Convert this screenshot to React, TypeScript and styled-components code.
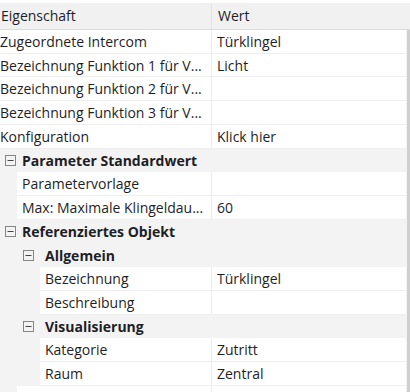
import React from "react";
import styled, { createGlobalStyle } from "styled-components";

const Global = createGlobalStyle`
  html, body { margin: 0; padding: 0; background: #ffffff; }
  body { font-family: "Open Sans", "Noto Sans", sans-serif; font-size: 14px; color: #1e1e26; }
`;

const NAME_W = 212;
const ROW_H = 23.73;

const Grid = styled.div`
  width: 410px;
  padding-top: 3px;
  overflow: hidden;
  height: 392px;
  box-sizing: border-box;
`;

const Header = styled.div`
  display: grid;
  grid-template-columns: ${NAME_W}px 1fr;
  height: 27px;
  background: #f1f1f1;
  border-bottom: 1px solid #dcdcdc;
  box-sizing: border-box;
`;

const HeaderCell = styled.div<{ $first?: boolean }>`
  display: flex;
  align-items: center;
  padding-left: ${(p) => (p.$first ? 1 : 6)}px;
  border-right: ${(p) => (p.$first ? "1px solid #e4e4e4" : "none")};
  line-height: 1;
`;

const Body = styled.div`
  border-right: 3px solid #cfcfcf;
  background: #f3f3f3;
`;

const RowBox = styled.div`
  display: flex;
  height: ${ROW_H}px;
  box-sizing: border-box;
  background: #f3f3f3;
`;

const Gutter = styled.div<{ $w: number }>`
  width: ${(p) => p.$w}px;
  flex: none;
  display: flex;
  align-items: center;
`;

const Spacer = styled.span<{ $w: number }>`
  width: ${(p) => p.$w}px;
  flex: none;
`;

const NameCell = styled.div<{ $pad: number; $w: number }>`
  width: ${(p) => p.$w}px;
  flex: none;
  box-sizing: border-box;
  background: #ffffff;
  border-right: 1px solid #ececec;
  border-bottom: 1px solid #efefef;
  padding-left: ${(p) => p.$pad}px;
  display: flex;
  align-items: center;
  white-space: nowrap;
  overflow: hidden;
`;

const ValueCell = styled.div`
  flex: 1;
  box-sizing: border-box;
  background: #ffffff;
  border-bottom: 1px solid #efefef;
  padding-left: 5px;
  display: flex;
  align-items: center;
  white-space: nowrap;
  overflow: hidden;
  margin-right: 1px;
`;

const CatLabel = styled.div`
  display: flex;
  align-items: center;
  font-weight: 700;
  white-space: nowrap;
`;

const ToggleBox = styled.svg`
  flex: none;
  display: block;
`;

const Toggle = () => (
  <ToggleBox width="11" height="11" viewBox="0 0 11 11">
    <rect x="0.5" y="0.5" width="10" height="10" fill="none" stroke="#858585" />
    <line x1="2.5" y1="5.5" x2="8.5" y2="5.5" stroke="#444" />
  </ToggleBox>
);

type Item =
  | { kind: "prop"; indent: number; name: string; value?: string }
  | { kind: "cat"; icon: number; text: number; name: string };

const items: Item[] = [
  { kind: "prop", indent: 0, name: "Zugeordnete Intercom", value: "Türklingel" },
  { kind: "prop", indent: 0, name: "Bezeichnung Funktion 1 für V...", value: "Licht" },
  { kind: "prop", indent: 0, name: "Bezeichnung Funktion 2 für V..." },
  { kind: "prop", indent: 0, name: "Bezeichnung Funktion 3 für V..." },
  { kind: "prop", indent: 0, name: "Konfiguration", value: "Klick hier" },
  { kind: "cat", icon: 5, text: 22, name: "Parameter Standardwert" },
  { kind: "prop", indent: 17, name: "Parametervorlage" },
  { kind: "prop", indent: 17, name: "Max: Maximale Klingeldau...", value: "60" },
  { kind: "cat", icon: 5, text: 22, name: "Referenziertes Objekt" },
  { kind: "cat", icon: 23, text: 45, name: "Allgemein" },
  { kind: "prop", indent: 40, name: "Bezeichnung", value: "Türklingel" },
  { kind: "prop", indent: 40, name: "Beschreibung" },
  { kind: "cat", icon: 23, text: 45, name: "Visualisierung" },
  { kind: "prop", indent: 40, name: "Kategorie", value: "Zutritt" },
  { kind: "prop", indent: 40, name: "Raum", value: "Zentral" },
  { kind: "prop", indent: 17, name: "" },
];

const Row = ({ item }: { item: Item }) => {
  if (item.kind === "cat") {
    return (
      <RowBox>
        <Gutter $w={item.text}>
          <Spacer $w={item.icon} />
          <Toggle />
        </Gutter>
        <CatLabel>{item.name}</CatLabel>
      </RowBox>
    );
  }
  return (
    <RowBox>
      <Gutter $w={item.indent} />
      <NameCell $w={NAME_W - item.indent} $pad={item.indent === 0 ? 0 : 5}>
        {item.name}
      </NameCell>
      <ValueCell>{item.value ?? ""}</ValueCell>
    </RowBox>
  );
};

export default function App() {
  return (
    <>
      <Global />
      <Grid>
        <Header>
          <HeaderCell $first>Eigenschaft</HeaderCell>
          <HeaderCell>Wert</HeaderCell>
        </Header>
        <Body>
          {items.map((it, i) => (
            <Row key={i} item={it} />
          ))}
        </Body>
      </Grid>
    </>
  );
}
